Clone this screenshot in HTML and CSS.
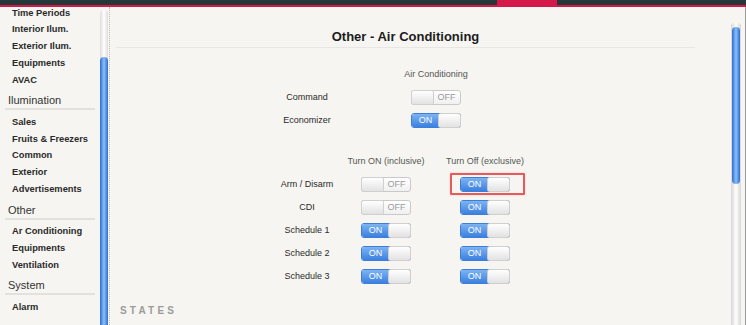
FILE: index.html
```html
<!DOCTYPE html>
<html>
<head>
<meta charset="utf-8">
<link rel="stylesheet" href="styles.css">
</head>
<body>
<div class="topbar"><div class="tab"></div></div>
<div class="layout">
  <aside class="sidebar">
    <div class="nav">
      <ul class="items">
        <li>Time Periods</li>
        <li>Interior Ilum.</li>
        <li>Exterior Ilum.</li>
        <li>Equipments</li>
        <li>AVAC</li>
      </ul>
      <div class="group-title">Ilumination</div>
      <ul class="items">
        <li>Sales</li>
        <li>Fruits &amp; Freezers</li>
        <li>Common</li>
        <li>Exterior</li>
        <li>Advertisements</li>
      </ul>
      <div class="group-title">Other</div>
      <ul class="items">
        <li>Ar Conditioning</li>
        <li>Equipments</li>
        <li>Ventilation</li>
      </ul>
      <div class="group-title">System</div>
      <ul class="items">
        <li>Alarm</li>
      </ul>
    </div>
  </aside>
  <div class="sb-scroll"><div class="sb-track"><div class="sb-thumb"></div></div></div>
  <main class="main">
    <h1 class="title">Other - Air Conditioning</h1>
    <div class="grid grid-ac">
      <div></div><div class="colhead">Air Conditioning</div>
      <div class="label">Command</div><div class="cell"><span class="toggle off"><span class="knob"></span><span class="txt">OFF</span></span></div>
      <div class="label">Economizer</div><div class="cell"><span class="toggle on"><span class="txt">ON</span><span class="knob"></span></span></div>
    </div>
    <div class="grid grid-turn">
      <div></div><div class="colhead">Turn ON (inclusive)</div><div class="colhead">Turn Off (exclusive)</div>
      <div class="label">Arm / Disarm</div>
      <div class="cell"><span class="toggle off"><span class="knob"></span><span class="txt">OFF</span></span></div>
      <div class="cell"><span class="toggle on hl"><span class="txt">ON</span><span class="knob"></span><span class="hlbox"></span></span></div>
      <div class="label">CDI</div>
      <div class="cell"><span class="toggle off"><span class="knob"></span><span class="txt">OFF</span></span></div>
      <div class="cell"><span class="toggle on"><span class="txt">ON</span><span class="knob"></span></span></div>
      <div class="label">Schedule 1</div>
      <div class="cell"><span class="toggle on"><span class="txt">ON</span><span class="knob"></span></span></div>
      <div class="cell"><span class="toggle on"><span class="txt">ON</span><span class="knob"></span></span></div>
      <div class="label">Schedule 2</div>
      <div class="cell"><span class="toggle on"><span class="txt">ON</span><span class="knob"></span></span></div>
      <div class="cell"><span class="toggle on"><span class="txt">ON</span><span class="knob"></span></span></div>
      <div class="label">Schedule 3</div>
      <div class="cell"><span class="toggle on"><span class="txt">ON</span><span class="knob"></span></span></div>
      <div class="cell"><span class="toggle on"><span class="txt">ON</span><span class="knob"></span></span></div>
    </div>
    <div class="states">STATES</div>
  </main>
  <div class="vscroll"><div class="vtrack"><div class="vthumb"></div></div></div>
  <div class="edge"></div>
</div>
</body>
</html>
```
FILE: styles.css
```css
html, body {
  margin: 0;
  padding: 0;
}
body {
  width: 746px;
  height: 325px;
  overflow: hidden;
  background: #f6f5f1;
  font-family: "Liberation Sans", Arial, sans-serif;
  color: #222;
}
.topbar {
  height: 5px;
  background: #26373a;
  border-bottom: 2px solid #d4184a;
  position: relative;
}
.tab {
  position: absolute;
  left: 497px;
  top: 0;
  width: 60px;
  height: 5px;
  background: #d4184a;
}
.layout {
  display: flex;
  height: 318px;
  overflow: hidden;
}
.sidebar {
  width: 99px;
  flex: none;
  overflow: hidden;
  background: #f6f5f1;
}
.nav {
  margin-top: -2.4px;
}
.items {
  list-style: none;
  margin: 0;
  padding: 3.5px 0 0 12px;
}
.items:first-child {
  padding-top: 0;
}
.items li {
  font-size: 9.3px;
  font-weight: bold;
  line-height: 16.75px;
  color: #2a2a2a;
  white-space: nowrap;
}
.group-title {
  margin: 4px 4px 0 5px;
  padding-left: 3px;
  font-size: 11px;
  line-height: 16px;
  color: #333;
  border-bottom: 2px solid #e2e1dd;
}
.sb-scroll {
  width: 11px;
  flex: none;
  border-right: 1px dotted #bdbdbd;
  box-sizing: border-box;
  padding: 3px 1px 0 1px;
}
.sb-track {
  height: 100%;
  border-radius: 5px 5px 0 0;
  background: linear-gradient(to right, #dcdcdc, #ffffff 50%, #dcdcdc);
  padding-top: 47px;
  box-sizing: border-box;
}
.sb-thumb {
  height: 100%;
  border-radius: 5px 5px 0 0;
  background: linear-gradient(to right, #2a6cd2, #8cc0f6 50%, #2a6cd2);
}
.main {
  flex: 1;
  min-width: 0;
  padding: 0 36px 0 6px;
  position: relative;
}
.title {
  margin: 20px 0 0 0;
  font-size: 13px;
  font-weight: bold;
  line-height: 20px;
  text-align: center;
  color: #1c1c1c;
  border-bottom: 1px solid #e7e6e2;
}
.grid {
  display: grid;
  grid-auto-rows: 23px;
  align-items: center;
  margin-left: 151px;
}
.grid-ac {
  grid-template-columns: 80px 178px;
  margin-top: 14.5px;
}
.grid-turn {
  grid-template-columns: 80px 78px 120px;
  margin-top: 18px;
}
.colhead {
  text-align: center;
  font-size: 9px;
  color: #555;
  white-space: nowrap;
}
.label {
  text-align: center;
  font-size: 9px;
  color: #2a2a2a;
  white-space: nowrap;
}
.cell {
  display: flex;
  justify-content: center;
}
.toggle {
  position: relative;
  display: flex;
  width: 50px;
  height: 15px;
  box-sizing: border-box;
  border: 1px solid #c9c9c9;
  border-radius: 3px;
  background: linear-gradient(#ffffff, #f0f0f0);
  font-size: 9px;
  line-height: 13px;
}
.toggle .knob {
  width: 21px;
  flex: none;
  background: linear-gradient(#ffffff, #e2e2e2);
  border-radius: 2px;
  box-shadow: 0 0 0 1px #d0d0d0;
}
.toggle .txt {
  flex: 1;
  text-align: center;
}
.toggle.off .txt {
  color: #9a9a9a;
}
.toggle.on {
  border-color: #3d7fd8;
}
.toggle.on .txt {
  color: #fff;
  background: linear-gradient(#7db3f2, #3b80e0);
  border-radius: 2px 0 0 2px;
}
.hlbox {
  position: absolute;
  left: -11px;
  right: -16px;
  top: -5px;
  bottom: -4px;
  border: 2px solid #e65a5c;
  border-radius: 1px;
  box-shadow: 0 0 2px rgba(200, 80, 80, 0.3);
}
.states {
  margin: 16px 0 0 4px;
  font-size: 10px;
  font-weight: bold;
  line-height: 14px;
  letter-spacing: 3.2px;
  color: #9b9b9b;
}
.vscroll {
  width: 10px;
  flex: none;
  padding-top: 16px;
  box-sizing: border-box;
}
.vtrack {
  height: 100%;
  background: linear-gradient(to right, #d6d6d6, #ffffff 50%, #d6d6d6);
  border-radius: 3px 3px 0 0;
  padding: 4px 1px 0 1px;
  box-sizing: border-box;
}
.vthumb {
  height: 157px;
  border-radius: 5px;
  background: linear-gradient(to right, #2a6cd2, #8cc0f6 50%, #2a6cd2);
}
.edge {
  width: 5px;
  flex: none;
  border-right: 1px solid #9a9a9a;
  box-sizing: border-box;
}
```
